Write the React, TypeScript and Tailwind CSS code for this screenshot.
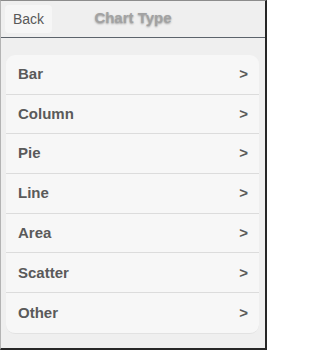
const CHART_TYPES = ["Bar", "Column", "Pie", "Line", "Area", "Scatter", "Other"];

export default function App() {
  return (
    <div className="w-[267px] h-[350px] flex flex-col bg-[#efefef] border-t border-l border-t-[#8c8c8c] border-l-[#b4b4b4] border-r-2 border-b-2 border-r-[#262626] border-b-[#262626] font-['Liberation_Sans',Arial,sans-serif]">
      {/* Header */}
      <header className="h-[37px] shrink-0 grid grid-cols-[1fr_auto_1fr] items-start border-b border-[#5c636b] bg-[#efefef]">
        <div className="pl-[4px] pt-[4px]">
          <button className="w-[47px] h-[28px] rounded-[4px] bg-[#f6f6f6] text-[14px] text-[#585858] leading-none">
            Back
          </button>
        </div>
        <h1 className="pt-[9px] text-[15px] font-bold leading-none text-[#a2a2a2] [text-shadow:0_1px_2px_rgba(0,0,0,0.35)]">
          Chart Type
        </h1>
        <div />
      </header>

      {/* List */}
      <div className="mt-[17px] ml-[5px] mr-[6px] rounded-[9px] bg-[#f7f7f7] border-b border-[#e2e2e2] overflow-hidden">
        {CHART_TYPES.map((name, i) => (
          <div
            key={name}
            className={
              "h-[39.7px] flex items-center justify-between pl-[12px] pr-[11px] text-[15px] font-bold text-[#5a5a5a] " +
              (i < CHART_TYPES.length - 1 ? "border-b border-[#dcdcdc]" : "")
            }
          >
            <span>{name}</span>
            <span>&gt;</span>
          </div>
        ))}
      </div>
    </div>
  );
}
